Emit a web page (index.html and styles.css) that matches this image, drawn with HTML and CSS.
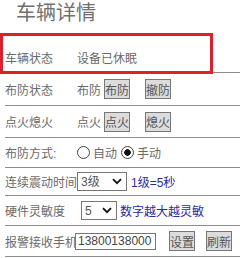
FILE: index.html
```html
<!DOCTYPE html>
<html lang="zh-CN">
<head>
    <meta charset="UTF-8">
    <meta name="viewport" content="width=device-width, initial-scale=1.0">
    <title>车辆详情</title>
    <link rel="stylesheet" href="styles.css">
</head>
<body>
    <div class="panel">
        <h1 class="title">车辆详情</h1>
        <div class="highlight"></div>
        <div class="rows">
            <div class="row row-status">
                <span class="label">车辆状态</span>
                <span class="value">设备已休眠</span>
            </div>
            <div class="row row-arm">
                <span class="label">布防状态</span>
                <span class="value">布防</span>
                <button class="btn">布防</button>
                <button class="btn btn-far">撤防</button>
            </div>
            <div class="row row-fire">
                <span class="label">点火熄火</span>
                <span class="value">点火</span>
                <button class="btn">点火</button>
                <button class="btn btn-far">熄火</button>
            </div>
            <div class="row row-mode">
                <span class="label">布防方式:</span>
                <label class="radio"><input type="radio" name="mode" value="auto"><span>自动</span></label>
                <label class="radio"><input type="radio" name="mode" value="manual" checked><span>手动</span></label>
            </div>
            <div class="row row-shake">
                <span class="label">连续震动时间</span>
                <span class="select select-wide">
                    <select>
                        <option>1级</option>
                        <option>2级</option>
                        <option selected>3级</option>
                        <option>4级</option>
                        <option>5级</option>
                    </select>
                    <svg class="chevron" width="10" height="7" viewBox="0 0 10 7"><path d="M1 1.2 L5 5.2 L9 1.2" fill="none" stroke="#111" stroke-width="1.8"/></svg>
                </span>
                <span class="hint">1级=5秒</span>
            </div>
            <div class="row row-sense">
                <span class="label">硬件灵敏度</span>
                <span class="select select-narrow">
                    <select>
                        <option>1</option>
                        <option>2</option>
                        <option>3</option>
                        <option>4</option>
                        <option selected>5</option>
                    </select>
                    <svg class="chevron" width="10" height="7" viewBox="0 0 10 7"><path d="M1 1.2 L5 5.2 L9 1.2" fill="none" stroke="#111" stroke-width="1.8"/></svg>
                </span>
                <span class="hint">数字越大越灵敏</span>
            </div>
            <div class="row row-phone">
                <span class="label">报警接收手机</span>
                <input type="text" class="phone" value="13800138000">
                <button class="btn btn-set">设置</button>
                <button class="btn btn-refresh">刷新</button>
            </div>
        </div>
    </div>
</body>
</html>
```

FILE: styles.css
```css
body {
    margin: 0;
    font-family: "Liberation Sans", "Noto Sans CJK SC", sans-serif;
    font-size: 12px;
    color: #6a6a6a;
    background: #fff;
    overflow: hidden;
}

.panel {
    position: relative;
    width: 240px;
}

.title {
    margin: 0;
    height: 42px;
    padding-left: 16px;
    font-size: 20px;
    font-weight: normal;
    line-height: 26px;
    color: #707070;
}

.highlight {
    position: absolute;
    left: 0;
    top: 33px;
    width: 213px;
    height: 41px;
    box-sizing: border-box;
    border: 3px solid #d9222d;
}

.rows {
    margin-left: 5px;
}

.row {
    display: flex;
    align-items: center;
    border-bottom: 1px solid #8c8c8c;
    white-space: nowrap;
}

.row-status { height: 30px; }
.row-arm { height: 32px; }
.row-fire { height: 31px; }
.row-mode { height: 29px; }
.row-shake { height: 27px; }
.row-sense { height: 29px; }
.row-phone { height: 30px; }

.label {
    flex: none;
    width: 72px;
}

.btn {
    height: 20px;
    margin: 0 0 0 3px;
    padding: 0;
    width: 26px;
    font-family: inherit;
    font-size: 12px;
    color: #555;
    background: #dcdcdc;
    border: 1px solid #777;
    border-radius: 0;
}

.btn-far {
    margin-left: 15px;
}

.radio {
    display: flex;
    align-items: center;
    margin-right: 4px;
}

.radio input {
    appearance: none;
    width: 13px;
    height: 13px;
    margin: 0 3px 0 0;
    border: 1px solid #444;
    border-radius: 50%;
    background: #fff;
}

.radio input:checked {
    background: radial-gradient(circle, #111 0 3px, #fff 3.5px);
}

.select {
    position: relative;
    display: inline-block;
}

.select select {
    appearance: none;
    height: 19px;
    padding: 0 0 0 3px;
    font-family: inherit;
    font-size: 12px;
    color: #555;
    background: #fff;
    border: 1px solid #777;
    border-radius: 0;
}

.select-wide select {
    width: 50px;
}

.select-narrow {
    margin-left: 4px;
}

.select-narrow select {
    width: 36px;
}

.chevron {
    position: absolute;
    right: 5px;
    top: 6px;
    pointer-events: none;
}

.hint {
    margin-left: 4px;
    color: #2a2aa0;
}

.row-sense .hint {
    margin-left: 3px;
}

.phone {
    width: 81px;
    height: 17px;
    box-sizing: border-box;
    margin-left: -2px;
    padding: 0 2px;
    font-family: inherit;
    font-size: 12px;
    color: #444;
    border: 1px solid #777;
    border-radius: 0;
}

.btn-set {
    margin-left: 13px;
}

.btn-refresh {
    margin-left: 11px;
}
```
